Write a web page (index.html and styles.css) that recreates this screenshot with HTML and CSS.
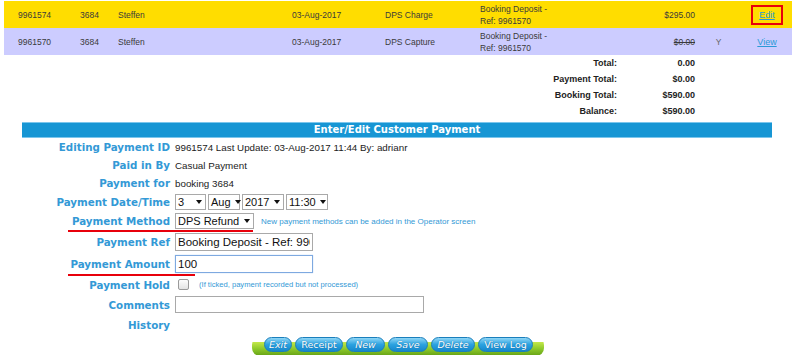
FILE: index.html
```html
<!DOCTYPE html>
<html lang="en">
<head>
    <meta charset="UTF-8">
    <title>Customer Payment</title>
    <link rel="stylesheet" href="styles.css">
</head>
<body>
    <div class="payments">
        <div class="pay-row current">
            <span>9961574</span>
            <span>3684</span>
            <span>Steffen</span>
            <span>03-Aug-2017</span>
            <span>DPS Charge</span>
            <span>Booking Deposit -<br>Ref: 9961570</span>
            <span class="amt">$295.00</span>
            <span class="flag"></span>
            <span class="act"><a href="#" class="boxed">Edit</a></span>
        </div>
        <div class="pay-row">
            <span>9961570</span>
            <span>3684</span>
            <span>Steffen</span>
            <span>03-Aug-2017</span>
            <span>DPS Capture</span>
            <span>Booking Deposit -<br>Ref: 9961570</span>
            <span class="amt"><s>$0.00</s></span>
            <span class="flag">Y</span>
            <span class="act"><a href="#">View</a></span>
        </div>
    </div>

    <div class="totals">
        <div class="tot-row"><span>Total:</span><span>0.00</span></div>
        <div class="tot-row"><span>Payment Total:</span><span>$0.00</span></div>
        <div class="tot-row"><span>Booking Total:</span><span>$590.00</span></div>
        <div class="tot-row"><span>Balance:</span><span>$590.00</span></div>
    </div>

    <div class="edit-form">
        <div class="form-title">Enter/Edit Customer Payment</div>

        <div class="field f-id">
            <label>Editing Payment ID</label>
            <div class="value">9961574 Last Update: 03-Aug-2017 11:44 By: adrianr</div>
        </div>
        <div class="field f-text">
            <label>Paid in By</label>
            <div class="value">Casual Payment</div>
        </div>
        <div class="field f-text">
            <label>Payment for</label>
            <div class="value">booking 3684</div>
        </div>
        <div class="field f-date">
            <label>Payment Date/Time</label>
            <div class="value">
                <span class="sel w-day">3</span>
                <span class="sel w-mon">Aug</span>
                <span class="sel w-year">2017</span>
                <span class="sel w-time">11:30</span>
            </div>
        </div>
        <div class="field f-method">
            <label>Payment Method</label>
            <div class="value">
                <span class="sel w-method">DPS Refund</span>
                <span class="note">New payment methods can be added in the Operator screen</span>
            </div>
            <span class="redline method-line"></span>
        </div>
        <div class="field f-ref">
            <label>Payment Ref</label>
            <div class="value"><input type="text" class="txt short" value="Booking Deposit - Ref: 9961570"></div>
        </div>
        <div class="field f-amount">
            <label>Payment Amount</label>
            <div class="value"><input type="text" class="txt short focused" value="100"></div>
            <span class="redline amount-line"></span>
        </div>
        <div class="field f-hold">
            <label>Payment Hold</label>
            <div class="value">
                <span class="check"></span>
                <span class="note small">(If ticked, payment recorded but not processed)</span>
            </div>
        </div>
        <div class="field f-comments">
            <label>Comments</label>
            <div class="value"><input type="text" class="txt long" value=""></div>
        </div>
        <div class="field f-history">
            <label>History</label>
            <div class="value"></div>
        </div>

        <div class="button-bar">
            <div class="bar">
                <button class="pill it w-exit">Exit</button>
                <button class="pill w-receipt">Receipt</button>
                <button class="pill it w-new">New</button>
                <button class="pill it w-save">Save</button>
                <button class="pill it w-delete">Delete</button>
                <button class="pill w-log">View Log</button>
            </div>
        </div>
    </div>
</body>
</html>
```

FILE: styles.css
```css
* {
    margin: 0;
    padding: 0;
    box-sizing: border-box;
}

body {
    background: #ffffff;
    font-family: 'Liberation Sans', Arial, sans-serif;
    color: #333;
    width: 800px;
    padding-top: 1px;
}

/* payments list */

.payments {
    margin: 0 8px 0 4px;
}

.pay-row {
    display: grid;
    grid-template-columns: 62px 38px 174px 93px 95px 140px 75px 47px 50px;
    align-items: center;
    height: 27px;
    padding-left: 14px;
    background: #ccccff;
    font-size: 8.5px;
    line-height: 12px;
    color: #3a3a3a;
}

.pay-row.current {
    background: #ffdd00;
}

.pay-row .amt {
    text-align: right;
}

.pay-row .flag {
    text-align: center;
    color: #666;
}

.pay-row .act {
    text-align: center;
}

.pay-row a {
    color: #2a9ad6;
    font-size: 9px;
    text-decoration: underline;
}

.pay-row a.boxed {
    display: inline-block;
    border: 2px solid #e8000b;
    padding: 3px 6px 2px;
    line-height: 11px;
}

/* totals */

.totals {
    padding-top: 0;
    padding-right: 105px;
}

.tot-row {
    display: flex;
    justify-content: flex-end;
    height: 16px;
    align-items: center;
    font-size: 9px;
    font-weight: bold;
    color: #222;
}

.tot-row span:first-child {
    width: 160px;
    text-align: right;
}

.tot-row span:last-child {
    width: 78px;
    text-align: right;
}

/* edit form */

.edit-form {
    margin: 3px 28px 0 22px;
}

.form-title {
    height: 16px;
    line-height: 14px;
    background: #1796d4;
    border-top: 1px solid #7cc6ec;
    border-bottom: 1px solid #7cc6ec;
    color: #fff;
    text-align: center;
    font-family: 'DejaVu Sans', Verdana, sans-serif;
    font-weight: bold;
    font-size: 10px;
}

.field {
    display: flex;
    align-items: center;
    position: relative;
}

.field label {
    width: 153px;
    text-align: right;
    padding-right: 5px;
    flex-shrink: 0;
    font-family: 'DejaVu Sans', Verdana, sans-serif;
    font-weight: bold;
    font-size: 10.3px;
    color: #3399d6;
}

.field .value {
    display: flex;
    align-items: center;
    gap: 2px;
    font-size: 9.8px;
    color: #222;
    white-space: nowrap;
}

.f-id { height: 18px; }
.f-text { height: 18px; }
.f-date { height: 19px; }
.f-method { height: 20px; }
.f-ref { height: 21px; }
.f-amount { height: 23px; }
.f-hold { height: 19px; }
.f-comments { height: 21px; }
.f-history { height: 20px; }

.sel {
    display: inline-flex;
    align-items: center;
    justify-content: space-between;
    height: 16px;
    padding: 0 3px 0 2px;
    border: 1px solid #a9a9a9;
    background: #fff;
    font-size: 11px;
    color: #111;
    white-space: nowrap;
}

.sel::after {
    content: "";
    border-left: 3px solid transparent;
    border-right: 3px solid transparent;
    border-top: 4px solid #111;
    margin-left: 4px;
}

.w-day { width: 31px; }
.w-mon { width: 32px; }
.w-year { width: 42px; }
.w-time { width: 42px; }
.w-method { width: 79px; }

.note {
    margin-left: 5px;
    font-size: 8px;
    color: #3399d6;
}

.note.small {
    margin-left: 8px;
    font-size: 7.6px;
}

.txt {
    height: 18px;
    border: 1px solid #a9a9a9;
    padding: 0 2px;
    font-family: 'Liberation Sans', Arial, sans-serif;
    font-size: 11.5px;
    color: #111;
    outline: none;
}

.txt.short { width: 138px; }
.txt.long { width: 249px; height: 17px; }

.txt.focused {
    border: 1px solid #7ea9e0;
    box-shadow: 0 0 1px #a8c8f0;
}

.check {
    width: 11px;
    height: 11px;
    margin-left: 3px;
    border: 1px solid #9a9a9a;
    border-radius: 2px;
    background: linear-gradient(#fdfdfd, #e4e4e4);
}

/* red annotation marks drawn over the form */
.redline {
    position: absolute;
    height: 2px;
    background: #e8000b;
}

.method-line {
    left: 46px;
    width: 185px;
    bottom: -1px;
}

.amount-line {
    left: 46px;
    width: 127px;
    bottom: -1px;
}

/* buttons */

.button-bar {
    display: flex;
    padding-left: 230px;
    padding-top: 2px;
}

.bar {
    display: flex;
    gap: 3px;
    padding: 0 11px 0 12px;
    height: 19px;
    background:
        linear-gradient(to bottom, transparent 0, transparent 5px, #c4e84a 5px, #8cc82a 12px, #6aa618 18px, transparent 18px);
    border-radius: 8px;
}

.pill {
    height: 15px;
    border: 1px solid #1a7fbc;
    border-radius: 8px;
    background: linear-gradient(#8fd6f6, #2ca2e0 50%, #1687cc);
    color: #fff;
    font-family: 'DejaVu Sans', Verdana, sans-serif;
    font-size: 9.5px;
    line-height: 13px;
    text-shadow: 0 0 1px #0b5f98;
}

.pill.it {
    font-style: italic;
}

.w-exit { width: 28px; }
.w-receipt { width: 48px; }
.w-new { width: 39px; }
.w-save { width: 40px; }
.w-delete { width: 44px; }
.w-log { width: 55px; }
```
